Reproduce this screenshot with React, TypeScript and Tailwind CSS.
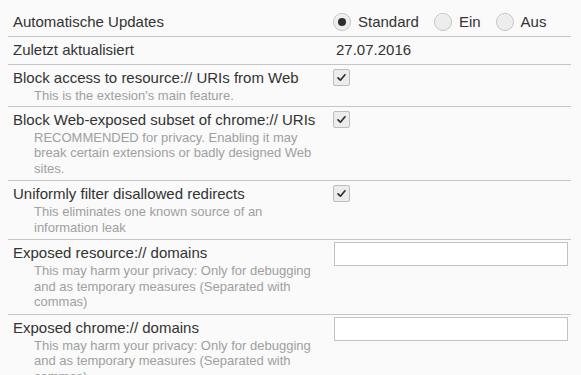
const Radio = ({ checked, label }: { checked?: boolean; label: string }) => (
  <label className="flex items-center">
    <span className="flex h-[18px] w-[18px] items-center justify-center rounded-full border border-[#c4c4c4] bg-[#ededed] shadow-[inset_0_1px_1px_rgba(255,255,255,0.8)]">
      {checked && <span className="h-[8px] w-[8px] rounded-full bg-[#2e2e2e]" />}
    </span>
    <span className="ml-[7px]">{label}</span>
  </label>
);

const Checkbox = () => (
  <span className="mt-[2px] flex h-[17px] w-[17px] items-center justify-center rounded-[2px] border border-[#bdbdbd] bg-[#ececec]">
    <svg width="11" height="11" viewBox="0 0 11 11" fill="none">
      <path d="M2 5.8 L4.4 8.2 L9 2.8" stroke="#2f2f2f" strokeWidth="1.7" strokeLinecap="round" strokeLinejoin="round" />
    </svg>
  </span>
);

const TextInput = () => (
  <input
    type="text"
    className="ml-[1px] h-[24px] w-[234px] border border-[#c2c2c2] bg-white px-1 text-[13px] outline-none"
  />
);

type Row = {
  title: string;
  desc?: string;
  control: React.ReactNode;
  tight?: boolean;
};

const rows: Row[] = [
  {
    title: "Block access to resource:// URIs from Web",
    desc: "This is the extesion's main feature.",
    control: <Checkbox />,
    tight: true,
  },
  {
    title: "Block Web-exposed subset of chrome:// URIs",
    desc: "RECOMMENDED for privacy. Enabling it may break certain extensions or badly designed Web sites.",
    control: <Checkbox />,
  },
  {
    title: "Uniformly filter disallowed redirects",
    desc: "This eliminates one known source of an information leak",
    control: <Checkbox />,
  },
  {
    title: "Exposed resource:// domains",
    desc: "This may harm your privacy: Only for debugging and as temporary measures (Separated with commas)",
    control: <TextInput />,
  },
  {
    title: "Exposed chrome:// domains",
    desc: "This may harm your privacy: Only for debugging and as temporary measures (Separated with commas)",
    control: <TextInput />,
  },
];

export default function App() {
  return (
    <div
      className="h-[375px] w-[581px] overflow-hidden bg-[#f9faf9] text-[15px] text-[#333333]"
      style={{ fontFamily: '"Liberation Sans", Arial, sans-serif' }}
    >
      <div className="mx-2 w-[563px]">
        <div className="flex border-b border-[#c6c6c6] pb-1 pt-3 leading-[20px]">
          <div className="w-[325px] pl-[5px]">Automatische Updates</div>
          <div className="flex items-center">
            <Radio checked label="Standard" />
            <span className="w-[15px]" />
            <Radio label="Ein" />
            <span className="w-[15px]" />
            <Radio label="Aus" />
          </div>
        </div>
        <div className="flex border-b border-[#c6c6c6] pb-[4px] pt-[3px] leading-[20px]">
          <div className="w-[325px] pl-[5px]">Zuletzt aktualisiert</div>
          <div className="pl-[3px]">27.07.2016</div>
        </div>
        {rows.map((r, i) => (
          <div
            key={i}
            className={
              r.tight
                ? "flex border-b border-[#c6c6c6] pb-[2px] pt-[2px]"
                : "flex border-b border-[#c6c6c6] pb-[4px] pt-[2px]"
            }
          >
            <div className="w-[325px] pl-[5px] pr-[10px] pt-[1px]">
              <div className="leading-[20px]">{r.title}</div>
              {r.desc && (
                <div className="pl-[21px] text-[13px] leading-[15.5px] text-[#a0a0a0]">
                  {r.desc}
                </div>
              )}
            </div>
            <div className="flex items-start">{r.control}</div>
          </div>
        ))}
      </div>
    </div>
  );
}
